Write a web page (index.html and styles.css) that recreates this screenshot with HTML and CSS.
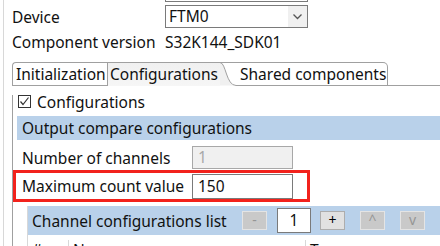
FILE: index.html
```html
<!DOCTYPE html>
<html lang="en">
<head>
    <meta charset="UTF-8">
    <meta name="viewport" content="width=device-width, initial-scale=1.0">
    <title>FTM component</title>
    <link rel="stylesheet" href="styles.css">
</head>
<body>
    <div class="frame">
        <div class="prev-field"></div>

        <div class="row first-row">
            <span>Device</span>
            <div class="select">
                <span class="select-value">FTM0</span>
                <span class="select-arrow">
                    <svg width="9" height="6" viewBox="0 0 9 6"><polyline points="0.5,0.5 4.5,4.5 8.5,0.5" fill="none" stroke="#555" stroke-width="1.3"/></svg>
                </span>
            </div>
        </div>
        <div class="row">
            <span>Component version</span>
            <span class="value">S32K144_SDK01</span>
        </div>

        <div class="folder">
            <div class="tabs">
                <div class="tab tab-first">Initialization</div>
                <div class="tab tab-active">Configurations</div>
                <svg class="tab-slope" width="16" height="24" viewBox="0 0 16 24">
                    <path d="M0 0 L16 0 L16 23 Z" fill="#fff"/>
                    <path d="M0 0.5 C6 0.5 6 23.5 16 23.5 L0 23.5 Z" fill="#f0f0f0"/>
                    <path d="M0 0.5 C6 0.5 6 23.5 16 23.5" fill="none" stroke="#a0a0a0"/>
                    <line x1="0" y1="0.5" x2="16" y2="0.5" stroke="#a0a0a0"/>
                </svg>
                <div class="tab tab-last">Shared components</div>
                <div class="tab-fill"></div>
            </div>

            <div class="pane">
                <div class="check">
                    <span class="check-box">
                        <svg width="11" height="11" viewBox="0 0 11 11"><polyline points="1.5,5.5 4,8.5 9.5,1.5" fill="none" stroke="#333" stroke-width="1.2"/></svg>
                    </span>
                    <span>Configurations</span>
                </div>

                <div class="section">Output compare configurations</div>

                <div class="field">
                    <span>Number of channels</span>
                    <span class="input disabled">1</span>
                </div>
                <div class="field marked">
                    <span>Maximum count value</span>
                    <span class="input">150</span>
                </div>

                <div class="list">
                    <div class="list-bar">
                        <span class="list-title">Channel configurations list</span>
                        <span class="btn off btn-minus">-</span>
                        <span class="count">1</span>
                        <span class="btn btn-plus">+</span>
                        <span class="btn off">^</span>
                        <span class="btn off">v</span>
                    </div>
                    <div class="table-head">
                        <span class="col-num">#</span>
                        <span class="col-name">Name</span>
                        <span class="col-type">Type</span>
                    </div>
                </div>
            </div>
        </div>
    </div>
</body>
</html>
```

FILE: styles.css
```css
* {
    box-sizing: border-box;
    margin: 0;
    padding: 0;
}

body {
    width: 440px;
    height: 246px;
    overflow: hidden;
    background: #fff;
    color: #111;
    font-family: 'Noto Sans', 'Open Sans', sans-serif;
    font-size: 15.5px;
    line-height: 20px;
}

.frame {
    margin-left: 3px;
    height: 246px;
    overflow: hidden;
    border-left: 1px solid #d8d8d8;
    padding-left: 8px;
}

.prev-field {
    margin-left: 153px;
    width: 143px;
    height: 2px;
    border: 1px solid #7a7a7a;
    border-top: none;
}

.row {
    display: grid;
    grid-template-columns: 153px 143px;
    align-items: center;
    height: 24px;
    margin-top: 2px;
}

.first-row {
    margin-top: 3px;
    height: 23px;
}

.select {
    display: flex;
    height: 23px;
    border: 1px solid #7a7a7a;
    background: #fff;
}

.select-value {
    flex: 1;
    padding-left: 3px;
    line-height: 21px;
}

.select-arrow {
    width: 19px;
    display: flex;
    align-items: center;
    justify-content: center;
    background: #f0f0f0;
}

.folder {
    margin-top: 8px;
}

.tabs {
    display: flex;
    height: 24px;
}

.tab {
    height: 24px;
    border-top: 1px solid #a0a0a0;
    border-bottom: 1px solid #a0a0a0;
    line-height: 22px;
    white-space: nowrap;
    background: #fff;
}

.tab-first {
    width: 95px;
    padding-left: 3px;
    border-left: 1px solid #a0a0a0;
    border-top-left-radius: 4px;
}

.tab-active {
    width: 113px;
    padding-left: 2px;
    border-left: 1px solid #a0a0a0;
    border-bottom: none;
    background: linear-gradient(#f0f0f0, #f6f6f6);
}

.tab-slope {
    display: block;
    flex: none;
}

.tab-last {
    width: 152px;
    padding-left: 4px;
    border-right: 1px solid #a0a0a0;
    border-top-right-radius: 5px;
}

.tab-fill {
    flex: 1;
    border-bottom: 1px solid #a0a0a0;
}

.pane {
    border-left: 1px solid #a0a0a0;
    padding-left: 4px;
    height: 160px;
}

.check {
    display: flex;
    align-items: center;
    gap: 6px;
    height: 13px;
    margin-top: 9px;
    margin-left: 1px;
}

.check-box {
    width: 13px;
    height: 13px;
    border: 1px solid #333;
    display: flex;
    align-items: center;
    justify-content: center;
}

.section {
    margin-top: 8px;
    height: 24px;
    line-height: 24px;
    padding-left: 5px;
    background: #b9d1ea;
}

.field {
    display: grid;
    grid-template-columns: 170px 101px;
    align-items: center;
    margin-top: 6px;
    padding-left: 5px;
    height: 23px;
}

.field.marked {
    margin-top: 1px;
    margin-left: -4px;
    width: 297px;
    height: 32px;
    padding-left: 6px;
    border: 3px solid #f2221c;
}

.input {
    height: 23px;
    border: 1px solid #7a7a7a;
    padding-left: 5px;
    line-height: 21px;
    background: #fff;
}

.marked .input {
    height: 25px;
    line-height: 23px;
}

.input.disabled {
    background: #f0f0f0;
    border-color: #a8a8a8;
    color: #a8a8a8;
}

.list {
    margin-top: 4px;
    margin-left: 10px;
    border-left: 1px solid #d8d8d8;
}

.list-bar {
    display: flex;
    align-items: center;
    height: 29px;
    background: #b9d1ea;
}

.list-title {
    width: 214px;
    padding-left: 4px;
    white-space: nowrap;
}

.btn {
    width: 25px;
    height: 19px;
    border: 1px solid #adadad;
    background: #e1e1e1;
    text-align: center;
    line-height: 16px;
    font-size: 14px;
    color: #000;
}

.btn.off {
    background: #c9c9c9;
    border-color: #e4e4e4;
    color: #959595;
}

.btn-minus {
    margin-right: 10px;
}

.count {
    width: 34px;
    height: 25px;
    margin-right: 9px;
    border: 1px solid #7a7a7a;
    background: #fff;
    text-align: center;
    line-height: 23px;
}

.btn-plus {
    margin-right: 15px;
}

.btn-plus + .btn {
    margin-right: 15px;
}

.table-head {
    display: grid;
    grid-template-columns: 40px 237px auto;
    height: 20px;
    padding-top: 5px;
    line-height: 20px;
}

.table-head span {
    padding-left: 4px;
}

.col-name,
.col-type {
    border-left: 1px solid #d8d8d8;
}
```
